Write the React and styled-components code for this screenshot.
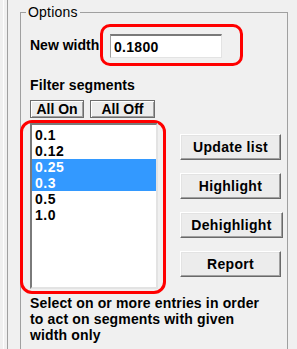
import React from "react";
import styled, { createGlobalStyle } from "styled-components";

const GlobalStyle = createGlobalStyle`
  html, body {
    margin: 0;
    padding: 0;
    background: #f0f0f0;
  }
  body {
    font-family: "Liberation Sans", Arial, sans-serif;
    font-size: 14px;
    color: #000;
  }
`;

const Page = styled.div`
  height: 349px;
  overflow: hidden;
  padding-left: 3px;
  background: #f0f0f0;
`;

const OuterEdge = styled.div`
  height: 100%;
  border-left: 1px solid #fdfdfd;
  padding-left: 3px;
`;

const InnerEdge = styled.div`
  height: 100%;
  border-left: 1px solid #a0a0a0;
  padding-left: 12px;
  padding-top: 12px;
`;

const GroupBox = styled.div`
  position: relative;
  width: 268px;
  height: 360px;
  box-sizing: border-box;
  border: 1px solid #a0a0a0;
  padding: 11px 0 0 9px;
`;

const Legend = styled.span`
  position: absolute;
  top: -9px;
  left: 5px;
  padding: 0 2px;
  background: #f0f0f0;
  font-size: 14px;
  line-height: 16px;
  letter-spacing: 0.2px;
`;

const Row = styled.div`
  display: flex;
  align-items: center;
  gap: ${(p) => p.gap || 0}px;
  margin-top: ${(p) => p.top || 0}px;
`;

const Label = styled.div`
  font-weight: bold;
  line-height: 16px;
  margin-top: ${(p) => p.top || 0}px;
  letter-spacing: 0.1px;
`;

const FieldLabel = styled(Label)`
  flex: 0 0 70px;
  letter-spacing: 0;
  white-space: nowrap;
`;

const Marker = styled.div`
  border: 3px solid #ff0000;
  border-radius: ${(p) => p.radius || 10}px;
  padding: ${(p) => p.pad};
  margin-left: ${(p) => p.shift || 0}px;
`;

const TextInput = styled.input`
  display: block;
  width: 112px;
  height: 24px;
  box-sizing: border-box;
  border: 1px solid #e3e3e3;
  border-top: 2px solid #7a7a7a;
  border-left: 1px solid #a0a0a0;
  background: #fff;
  font-family: "Liberation Sans", Arial, sans-serif;
  font-size: 14px;
  font-weight: bold;
  letter-spacing: 0.3px;
  padding: 0 3px;
  outline: none;
  color: #000;
`;

const SmallButton = styled.button`
  height: 18px;
  width: ${(p) => p.w}px;
  box-sizing: border-box;
  padding: 0;
  border: 1px solid #6d6d6d;
  box-shadow: inset 1px 1px #ffffff, inset -1px -1px #a0a0a0;
  background: #ececec;
  font-family: "Liberation Sans", Arial, sans-serif;
  font-size: 14px;
  font-weight: bold;
  line-height: 14px;
  color: #000;
`;

const Main = styled.div`
  display: flex;
  align-items: flex-start;
  margin-top: 2px;
`;

const ListBox = styled.div`
  width: 128px;
  height: 166px;
  box-sizing: border-box;
  background: #fff;
  border-top: 2px solid #7a7a7a;
  border-left: 2px solid #7a7a7a;
  border-right: 2px solid #e3e3e3;
  border-bottom: 2px solid #e3e3e3;
  padding-top: 2px;
`;

const ListItem = styled.div`
  height: 16px;
  line-height: 16px;
  padding-left: 3px;
  font-weight: bold;
  letter-spacing: 0.5px;
  background: ${(p) => (p.selected ? "#3399ff" : "transparent")};
  color: ${(p) => (p.selected ? "#fff" : "#000")};
`;

const ButtonColumn = styled.div`
  display: flex;
  flex-direction: column;
  align-items: flex-start;
  gap: 13px;
  margin-top: 14px;
  margin-left: 14px;
`;

const ActionButton = styled.button`
  width: ${(p) => p.w || 101}px;
  height: 26px;
  box-sizing: border-box;
  padding: 0;
  border-top: 1px solid #ffffff;
  border-left: 1px solid #ffffff;
  border-right: 1px solid #696969;
  border-bottom: 1px solid #696969;
  box-shadow: inset -1px -1px #a0a0a0, inset 1px 1px #e3e3e3;
  background: #ececec;
  font-family: "Liberation Sans", Arial, sans-serif;
  font-size: 14px;
  font-weight: bold;
  letter-spacing: 0.3px;
  color: #000;
`;

const Hint = styled.div`
  margin-top: 1px;
  font-weight: bold;
  line-height: 16px;
  letter-spacing: 0.15px;
`;

const widths = [
  { value: "0.1", selected: false },
  { value: "0.12", selected: false },
  { value: "0.25", selected: true },
  { value: "0.3", selected: true },
  { value: "0.5", selected: false },
  { value: "1.0", selected: false },
];

const actions = [
  { label: "Update list" },
  { label: "Highlight" },
  { label: "Dehighlight", w: 103 },
  { label: "Report" },
];

export default function App() {
  return (
    <>
      <GlobalStyle />
      <Page>
        <OuterEdge>
          <InnerEdge>
            <GroupBox>
              <Legend>Options</Legend>
              <Row>
                <FieldLabel>New width</FieldLabel>
                <Marker pad="7px 18px 5px 7px">
                  <TextInput defaultValue="0.1800" />
                </Marker>
              </Row>
              <Label top={11}>Filter segments</Label>
              <Row gap={6} top={7}>
                <SmallButton w={54}>All On</SmallButton>
                <SmallButton w={65}>All Off</SmallButton>
              </Row>
              <Main>
                <Marker pad="0 5px 2px 7px" shift={-10} radius={12}>
                  <ListBox>
                    {widths.map((item) => (
                      <ListItem key={item.value} selected={item.selected}>
                        {item.value}
                      </ListItem>
                    ))}
                  </ListBox>
                </Marker>
                <ButtonColumn>
                  {actions.map((a) => (
                    <ActionButton key={a.label} w={a.w}>
                      {a.label}
                    </ActionButton>
                  ))}
                </ButtonColumn>
              </Main>
              <Hint>
                Select on or more entries in order
                <br />
                to act on segments with given
                <br />
                width only
              </Hint>
            </GroupBox>
          </InnerEdge>
        </OuterEdge>
      </Page>
    </>
  );
}
